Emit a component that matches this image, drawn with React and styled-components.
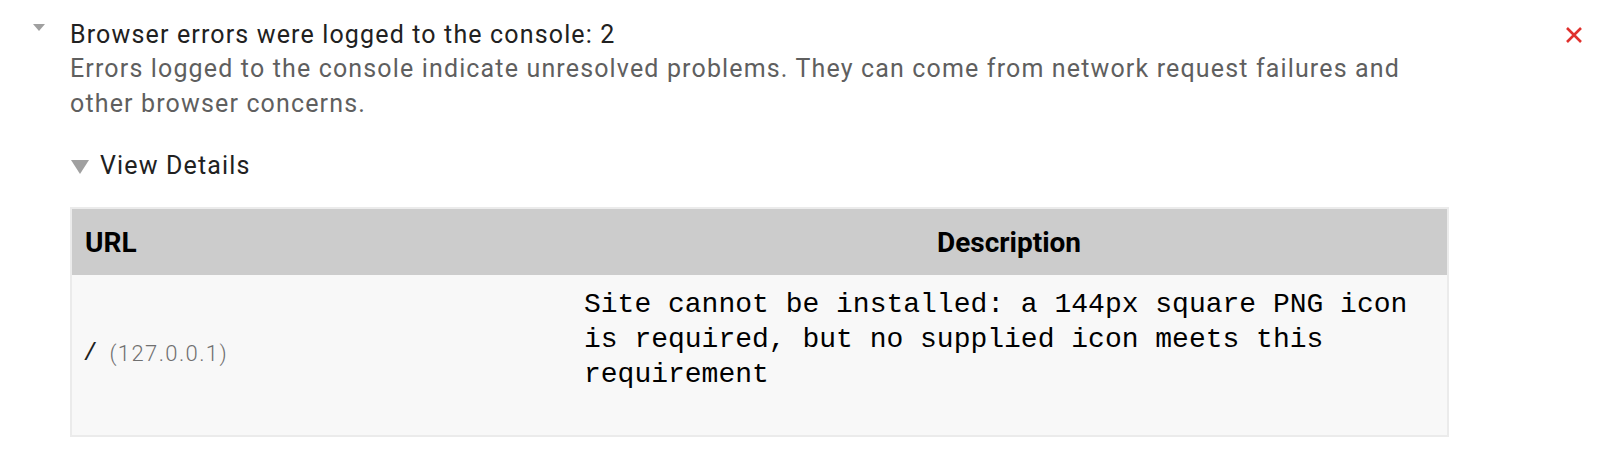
import styled, { createGlobalStyle } from 'styled-components';

const GlobalStyle = createGlobalStyle`
  html, body {
    margin: 0;
    padding: 0;
    background: #ffffff;
  }

  body {
    font-family: Roboto, "Liberation Sans", sans-serif;
  }
`;

const Audit = styled.div`
  display: flex;
  align-items: flex-start;
  padding: 18px 33px 0 33px;
`;

const Arrow = styled.span`
  flex: none;
  width: 0;
  height: 0;
  margin-top: 6px;
  margin-right: 25px;
  border-left: 6px solid transparent;
  border-right: 6px solid transparent;
  border-top: 7px solid #a0a0a0;
`;

const Content = styled.div`
  flex: 1;
  min-width: 0;
  margin-right: 116px;
`;

const Title = styled.div`
  font-size: 25px;
  line-height: 33px;
  letter-spacing: 1.15px;
  color: #212121;
`;

const Description = styled.div`
  max-width: 1350px;
  font-size: 25px;
  line-height: 35px;
  letter-spacing: 1.15px;
  color: #5f5f5f;
`;

const Details = styled.div`
  margin-top: 27px;
`;

const Summary = styled.div`
  display: flex;
  align-items: center;
  font-size: 25px;
  line-height: 35px;
  letter-spacing: 1.15px;
  color: #212121;
`;

const SummaryArrow = styled.span`
  flex: none;
  width: 0;
  height: 0;
  margin: 2px 11px 0 1px;
  border-left: 9px solid transparent;
  border-right: 9px solid transparent;
  border-top: 14px solid #a0a0a0;
`;

const Table = styled.div`
  margin-top: 24px;
  border: 2px solid #ebebeb;
`;

const Row = styled.div`
  display: grid;
  grid-template-columns: 499px 1fr;
  background: ${(p) => (p.$head ? '#cccccc' : '#f8f8f8')};
`;

const HeadCell = styled.div`
  height: 66px;
  padding: 0 13px;
  display: flex;
  align-items: center;
  justify-content: ${(p) => (p.$center ? 'center' : 'flex-start')};
  font-size: 28px;
  font-weight: 700;
  color: #000000;
`;

const UrlCell = styled.div`
  display: flex;
  align-items: center;
  gap: 12px;
  padding: 0 13px 4px 11px;
`;

const Path = styled.span`
  font-family: "Liberation Mono", monospace;
  font-size: 24px;
  color: #212121;
`;

const Host = styled.span`
  font-size: 22px;
  font-weight: 300;
  letter-spacing: 1.4px;
  color: #707070;
`;

const CodeCell = styled.div`
  padding: 12px 13px 43px;
  font-family: "Liberation Mono", "Courier New", monospace;
  font-size: 28px;
  line-height: 35px;
  color: #000000;
`;

const Close = styled.svg`
  flex: none;
  margin-top: 8px;
`;

const CloseIcon = () => (
  <Close width="18" height="18" viewBox="0 0 18 18">
    <path d="M2 2 L16 16 M16 2 L2 16" stroke="#e0312d" strokeWidth="2.6" strokeLinecap="butt" />
  </Close>
);

const App = () => {
  return (
    <>
      <GlobalStyle />
      <Audit>
        <Arrow />
        <Content>
          <Title>Browser errors were logged to the console: 2</Title>
          <Description>
            Errors logged to the console indicate unresolved problems. They can come from network
            request failures and other browser concerns.
          </Description>
          <Details>
            <Summary>
              <SummaryArrow />
              View Details
            </Summary>
            <Table>
              <Row $head>
                <HeadCell>URL</HeadCell>
                <HeadCell $center>Description</HeadCell>
              </Row>
              <Row>
                <UrlCell>
                  <Path>/</Path>
                  <Host>(127.0.0.1)</Host>
                </UrlCell>
                <CodeCell>
                  Site cannot be installed: a 144px square PNG icon is required, but no supplied
                  icon meets this requirement
                </CodeCell>
              </Row>
            </Table>
          </Details>
        </Content>
        <CloseIcon />
      </Audit>
    </>
  );
};

export default App;
